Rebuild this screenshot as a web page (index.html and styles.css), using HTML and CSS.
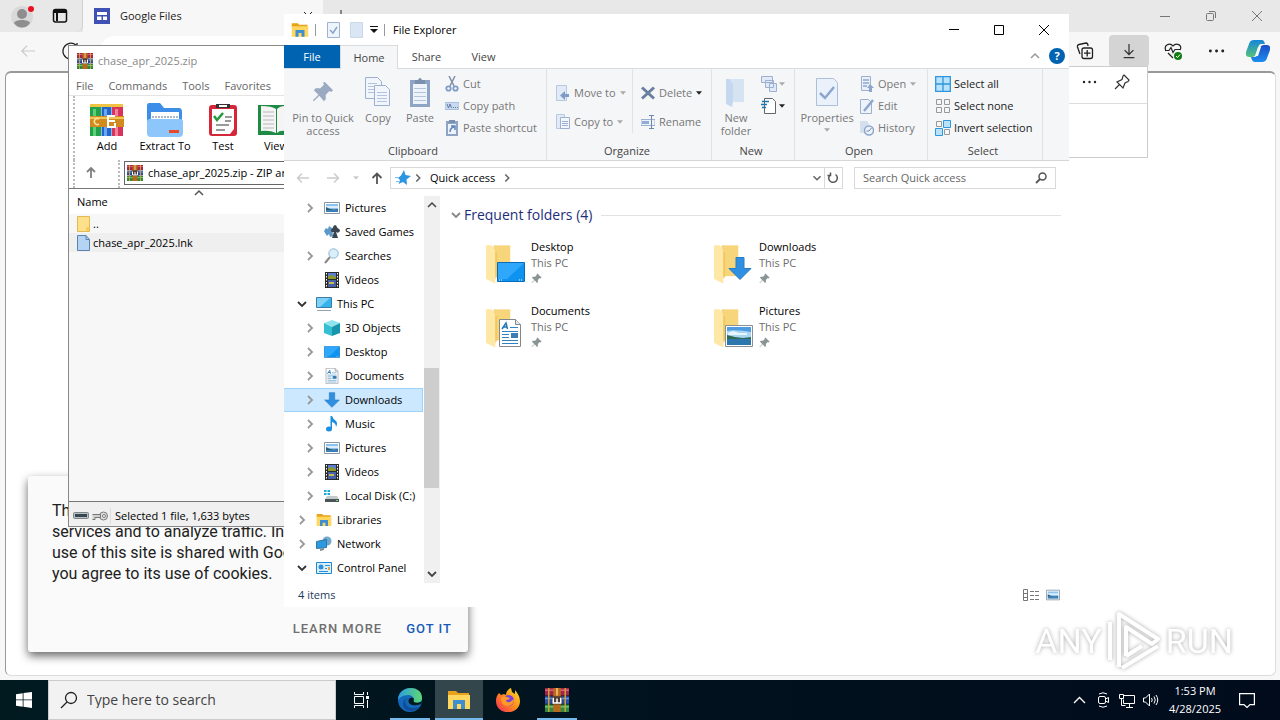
FILE: index.html
```
<!DOCTYPE html>
<html lang="en">

<head>
  <meta charset="UTF-8">
  <meta name="viewport" content="width=device-width, initial-scale=1.0">
  <title>Desktop</title>
  <link rel="stylesheet" href="styles.css">
</head>

<body>
  <!-- shared icons -->
  <svg class="sprite" aria-hidden="true">
    <symbol id="rar" viewBox="0 0 16 16">
      <path fill="#a3254b" d="M0 0h16v5H0z"/><path fill="#2b4fa8" d="M0 5.5h16v5H0z"/><path fill="#2d8a3e" d="M0 11h16v5H0z"/>
      <path fill="#e25c7a" d="M0 1h16v1H0z"/><path fill="#6a9be0" d="M0 6.5h16v1H0z"/><path fill="#6cc46e" d="M0 12h16v1H0z"/>
      <path fill="#c9a13a" d="M2 0h1v16H2zM13 0h1v16h-1z"/>
      <path fill="#b8691c" d="M5.5 0h5v16h-5z"/><path fill="#f3cf7a" d="M7.500 0h1v5h-1z"/>
      <path fill="#4c3b36" d="M4.5 5.5h7V11h-7z"/><path fill="none" stroke="#fff" d="M5.500 6.500v3.500h5v-3.500M8 7v3"/>
    </symbol>
    <symbol id="folder-lib" viewBox="0 0 24 20">
      <path fill="#e9a21b" d="M1 1h8l2 2h11v4H1z"/><path fill="#ffd75e" d="M1 5h22v14H1z"/><path fill="#3f8fd0" d="M6 19v-9h12v9h-4v-5h-4v5z"/>
    </symbol>
    <symbol id="chev-r" viewBox="0 0 16 16"><path fill="none" stroke="currentColor" stroke-width="1.8" d="M6 4l4 4-4 4"/></symbol>
    <symbol id="chev-d" viewBox="0 0 16 16"><path fill="none" stroke="currentColor" stroke-width="1.8" d="M4 6l4 4 4-4"/></symbol>
    <symbol id="chev-u" viewBox="0 0 16 16"><path fill="none" stroke="currentColor" stroke-width="1.5" d="M4 10l4-4 4 4"/></symbol>
    <symbol id="caret" viewBox="0 0 7 4"><path fill="currentColor" d="M0 0h7L3.500 4z"/></symbol>
    <symbol id="picture" viewBox="0 0 16 12">
      <path fill="#fff" stroke="#8a98a5" d="M.5.5h15v11H.5z"/><path fill="#8cc4ef" d="M2 2h12v8H2z"/><path fill="#dceefb" d="M2 4h12v2H2z"/><path fill="#2d5f74" d="M2 5l4 2 4 .5 4-.5v1H2z"/><path fill="#3c7fb8" d="M2 8h12v2H2z"/>
    </symbol>
    <symbol id="photo" viewBox="0 0 28 22">
      <path fill="#fff" stroke="#8a8f94" d="M.5.5h27v21H.5z"/><path fill="#4f9be0" d="M2 2h24v18H2z"/><path fill="#a9d6f5" d="M2 6q8-2 24 1v6H2z"/><path fill="#e9f5fc" d="M3 8l5-2 6 2 8 0v2H3z"/><path fill="#2f6a55" d="M2 10l8 2 8 1 8-1v3H2z"/><path fill="#2c77ae" d="M2 14h24v6H2z"/>
    </symbol>
    <symbol id="film" viewBox="0 0 14 16">
      <path fill="#2a2a2a" d="M0 0h14v16H0z"/><path fill="#5c7fd6" d="M3 1h8v6H3z"/><path fill="#8a9a30" d="M3 4l4-1 4 2v2H3z"/><path fill="#4661a8" d="M3 8h8v7H3z"/><path fill="#d0b84a" d="M4 10h5v2H4z"/>
      <path stroke="#fff" stroke-dasharray="1.5 1.5" d="M1.500 1v14M12.500 1v14"/>
    </symbol>
    <symbol id="arrow-down" viewBox="0 0 24 24"><path fill="#2f8fe0" stroke="#2b7cc4" d="M8 1h8v11h7L12 23 1 12h7z"/></symbol>
    <symbol id="screen" viewBox="0 0 28 20">
      <path fill="#0f93f0" stroke="#0a6cb8" d="M.5.5h27v19H.5z"/><path fill="#2fa8fb" d="M1 1h26L10 17H1z"/><path stroke="#fff" stroke-dasharray="1 1" d="M2 18h4M22 18h4"/>
    </symbol>
    <symbol id="doc" viewBox="0 0 22 28">
      <path fill="#fff" stroke="#82888e" d="M.5.5h16l5 5v22H.5z"/><path fill="#e4e7ea" stroke="#82888e" d="M16.500.5v5h5"/>
      <path fill="none" stroke="#2277b8" stroke-width="1.5" d="M3 10l4-6 1.500 6M4 8h4"/><path stroke="#2f83c2" d="M11 8.500h8M3 12.500h16M3 15.500h7M3 18.500h7M3 21.500h16M3 24.500h16"/><path fill="#3b7db5" d="M12 14h7v5h-7z"/>
    </symbol>
    <symbol id="folder" viewBox="0 0 30 42">
      <path fill="#f7d57a" d="M8 1h18v33H8z"/><path fill="#ffe7a5" d="M0 1h6l4 6v35L0 37z"/><path fill="#f1c95f" d="M10 7v30l2-3V9z"/>
    </symbol>
    <symbol id="pin" viewBox="0 0 24 24"><path fill="currentColor" d="M14 1l9 9-2 2-2-1-4 4v5l-2 2-5-6-6 6-1-1 6-6-5-5 2-2h5l4-4-1-2z"/></symbol>
  </svg>

  <main class="desktop">
    <section class="browser">
      <div class="tabstrip">
        <div class="corner">
          <svg class="avatar" viewBox="0 0 24 24"><circle cx="11" cy="13" r="11" fill="#d9d9d9"/><circle cx="11" cy="10" r="5" fill="#8e8e8e"/><path fill="#8e8e8e" d="M3 19c1-4 15-4 16 0-4 6-12 6-16 0z"/><circle cx="20" cy="5" r="3" fill="#e81123"/></svg>
          <svg class="workspaces" viewBox="0 0 16 16"><rect x="1.5" y="1.5" width="13" height="12.5" rx="2" fill="none" stroke="#111" stroke-width="1.5"/><path fill="#111" d="M2 2h12v3H2zM4 4h2v9H4z"/></svg>
        </div>
        <div class="tab">
          <svg class="favicon" viewBox="0 0 16 16"><path fill="#3f51b5" d="M0 0h16v16H0z"/><path fill="#fff" d="M3 4h10v3H3zM3 8.500h4.500V12H3zM9 8.500h4V12H9z"/></svg>
          <span>Google Files</span>
          <svg class="tab-close" viewBox="0 0 10 10"><path stroke="#222" d="M1 1l8 8M9 1L1 9"/></svg>
        </div>
        <svg class="new-tab" viewBox="0 0 12 12"><path stroke="#222" d="M6 0v12M0 6h12"/></svg>
        <div class="win-controls">
          <svg viewBox="0 0 12 12"><path stroke="#777" d="M1 6.500h10"/></svg>
          <svg viewBox="0 0 12 12"><rect x="1.5" y="3.5" width="7" height="7" rx="1" fill="none" stroke="#777"/><path fill="none" stroke="#777" d="M4 1.500h5q1.500 0 1.500 1.500v5"/></svg>
          <svg viewBox="0 0 12 12"><path stroke="#777" d="M1 1l10 10M11 1L1 11"/></svg>
        </div>
      </div>
      <div class="toolbar">
        <svg class="back" viewBox="0 0 18 16"><path fill="none" stroke="#c9c9c9" stroke-width="1.3" d="M17 8H2M8 2L2 8l6 6"/></svg>
        <svg class="reload" viewBox="0 0 18 18"><path fill="none" stroke="#222" stroke-width="1.3" d="M14 3a8 8 0 1 0 3 6M15 1v4h-4"/></svg>
        <div class="omnibox"><svg viewBox="0 0 14 14"><circle cx="6" cy="5" r="3.5" fill="none" stroke="#333"/><path stroke="#333" d="M9 8l4 4"/></svg></div>
        <div class="actions">
          <svg viewBox="0 0 18 18"><path fill="none" stroke="#222" stroke-width="1.3" d="M4 12L1.500 5Q1 3 3 2.500l7-1.500q2 0 2 3"/><rect x="6" y="6" width="10.5" height="10.5" rx="2" fill="#f7f7f7" stroke="#222" stroke-width="1.3"/><path stroke="#222" stroke-width="1.3" d="M11.200 8v6.500M8 11.200h6.500"/></svg>
          <button class="downloads-btn" aria-label="Downloads"><svg viewBox="0 0 16 18"><path fill="none" stroke="#333" stroke-width="1.4" d="M8 1v12M3 8l5 5 5-5M2 16.500h12"/></svg></button>
          <svg viewBox="0 0 18 18"><path fill="none" stroke="#222" stroke-width="1.2" d="M2 9C-1 3 6 0 9 4c3-4 10-1 7 4M4 11l5 5M1 8.500h4l2-3 2 5 2-3h5"/><circle cx="14" cy="14" r="4" fill="#107c10"/><path fill="none" stroke="#fff" d="M12 14l1.500 1.500L16 12.500"/></svg>
          <svg viewBox="0 0 16 16"><g fill="#222"><circle cx="3" cy="8" r="1.3"/><circle cx="8.5" cy="8" r="1.3"/><circle cx="14" cy="8" r="1.3"/></g></svg>
          <svg class="copilot" viewBox="0 0 24 22">
            <defs><linearGradient id="cpA" x2="0" y2="1"><stop stop-color="#1686d9"/><stop offset="1" stop-color="#54c27b"/></linearGradient><linearGradient id="cpB" x2="0" y2="1"><stop stop-color="#1c4fc4"/><stop offset="1" stop-color="#1b8cf0"/></linearGradient></defs>
            <path fill="url(#cpB)" d="M16 22H9q-3 0-4-5h4q2 0 3-3l2-6q1-3 4-3h3q4 0 3 5l-3 8q-1 4-5 4z"/>
            <path fill="url(#cpA)" d="M8 0h8q2 0 3 4h-4q-2 0-3 4l-2 6q-1 3-4 3H3q-4 0-3-5L3 4q1-4 5-4z"/>
            <path fill="#f7f7f7" d="M12 7h3l-3 9H9z"/>
          </svg>
        </div>
      </div>
      <div class="page">
        <div class="cookie-bar">
          <p>This site uses cookies from Google to deliver its services and to analyze traffic. Information about your use of this site is shared with Google. By using this site, you agree to its use of cookies.</p>
          <div class="cookie-actions">
            <button>LEARN MORE</button>
            <button class="primary">GOT IT</button>
          </div>
        </div>
      </div>
      <div class="downloads-panel">
        <div class="panel-head">
          <svg viewBox="0 0 16 16"><g fill="#222"><circle cx="3" cy="8" r="1.2"/><circle cx="8.5" cy="8" r="1.2"/><circle cx="14" cy="8" r="1.2"/></g></svg>
          <svg viewBox="0 0 18 18"><path fill="none" stroke="#333" stroke-width="1.2" d="M11 2l5 5-1 1.500-3 1.500-2 5L4 9l5-2.500L10 3zM6.500 11.500L2 16"/></svg>
        </div>
      </div>
    </section>

    <section class="window winrar">
      <header class="title"><svg><use href="#rar"/></svg>chase_apr_2025.zip</header>
      <nav class="menu"><a href="#">File</a><a href="#">Commands</a><a href="#">Tools</a><a href="#">Favorites</a></nav>
      <div class="tools">
        <button>
          <svg viewBox="0 0 34 34">
            <path fill="#22a04a" d="M0 1h11v32H0z"/><path fill="#2366c9" d="M11.500 1h10v32h-10z"/><path fill="#d8345b" d="M22 1h11v32H22z"/><path fill="#5fd07a" d="M3 6h3v27H3z"/><path fill="#6aa5f2" d="M14 6h3v27h-3z"/><path fill="#f3839d" d="M25 6h3v27h-3z"/>
            <path fill="#f0c443" d="M0 1h33v3H0z"/><path fill="#d18a1e" d="M0 13h34v11H0z"/><path fill="#f4c457" d="M0 14h34v2H0z"/><path fill="none" stroke="#fff" stroke-width="2" d="M25 13h-7v11h7v-4M19 18h6"/><path fill="none" stroke="#fbe29a" stroke-width="1.5" d="M9 16a3 3 0 1 0 0 5"/>
          </svg>Add</button>
        <button>
          <svg viewBox="0 0 36 34"><path fill="#3d8ee8" d="M2 0h11l4 5h15q3 0 3 4v12H0V3q0-3 2-3z"/><path fill="#fff" d="M4 9h28v10H4z"/><path stroke="#aab8c8" stroke-width="2" stroke-dasharray="2 1" d="M5 14h26"/><path fill="#8cc6fa" d="M0 19q0-3 3-3h30q3 0 3 3v11q0 4-4 4H4q-4 0-4-4z"/><path fill="#e8472b" d="M22 27h10v3H22z"/></svg>Extract To</button>
        <button>
          <svg viewBox="0 0 30 34"><rect x="1" y="2" width="28" height="31" rx="3" fill="#d5263a"/><path fill="#fdfdfd" d="M4 6h22v20l-4 5H4z"/><path fill="#333" d="M8 1h14v4H8z"/><path fill="#fff" d="M11 2h8v2h-8z"/><path fill="none" stroke="#249a3e" stroke-width="2.5" d="M6 13l3 4 6-7"/><path stroke="#777" stroke-width="1.5" d="M17 14h7M17 18h6M8 22h13M8 27h9"/></svg>Test</button>
        <button class="view">
          <svg viewBox="0 0 36 34"><path fill="#1f8a44" d="M0 2h28v30H0z"/><path fill="#b7263a" d="M26 2h10v30H26z"/><path fill="#f4f4f4" d="M3 3q11 0 15 3v24q-6-3-15-2zM19 6q3-3 8-3v25q-5-1-8 2z"/><path stroke="#b9b9b9" d="M5 9h11M5 13h11M5 17h11M5 21h11M5 25h11"/></svg>View</button>
      </div>
      <div class="path">
        <button aria-label="Up"><svg viewBox="0 0 12 12"><path fill="none" stroke="#808080" stroke-width="1.8" d="M6 12V2M2 6l4-4 4 4"/></svg></button>
        <div class="path-field">
          <div class="path-box"><svg><use href="#rar"/></svg>chase_apr_2025.zip - ZIP archive</div>
        </div>
      </div>
      <div class="list">
        <div class="list-head">Name<svg><use href="#chev-u"/></svg></div>
        <div class="file"><svg viewBox="0 0 13 16"><path fill="#ffe08a" stroke="#e2b955" d="M.5.500h12v15H.5z"/><path fill="#f7cd62" d="M9 11h3v4H9z"/></svg>..</div>
        <div class="file selected"><svg viewBox="0 0 13 16"><path fill="#b5d4f3" stroke="#5b83b0" d="M.5.500h8.500l3.500 4v11H.5z"/><path fill="none" stroke="#5b83b0" d="M9 .5v4h3.500"/></svg>chase_apr_2025.lnk</div>
      </div>
      <footer>
        <div class="disk">
          <svg viewBox="0 0 16 12"><rect x=".5" y="2.5" width="15" height="6" rx="1" fill="#b8bec2" stroke="#7e878c"/><path fill="#37474f" d="M2 4h12v3H2z"/></svg>
          <svg viewBox="0 0 16 12"><circle cx="11.5" cy="6" r="4" fill="#e0e0e0" stroke="#777"/><circle cx="12" cy="6" r="1.5" fill="#fff" stroke="#777"/><path fill="#d0d0d0" stroke="#777" d="M.5 4.500h8v3H3v2H.5"/></svg>
        </div>
        <span>Selected 1 file, 1,633 bytes</span>
      </footer>
    </section>

    <section class="window explorer">
      <header class="title">
        <svg class="app"><use href="#folder-lib"/></svg>
        <i class="bar"></i>
        <svg class="qa" viewBox="0 0 13 16"><path fill="#eef4fb" stroke="#9fb3cf" d="M.5.500h12v15H.5z"/><path fill="none" stroke="#8aa4c8" stroke-width="1.5" d="M3 8l3 3 4-6"/></svg>
        <svg class="qa" viewBox="0 0 13 16"><path fill="#dbe6f4" stroke="#c9d8ea" d="M.5.500h12v15H.5z"/></svg>
        <svg class="more" viewBox="0 0 8 8"><path fill="#111" d="M0 0h8v1H0zM0 3h8L4 7z"/></svg>
        <i class="bar"></i>
        <h1>File Explorer</h1>
        <div class="win-controls">
          <button aria-label="Minimize"><svg viewBox="0 0 12 12"><path stroke="#000" d="M1 5.500h10"/></svg></button>
          <button aria-label="Maximize"><svg viewBox="0 0 12 12"><path fill="none" stroke="#000" d="M1.500 1.500h9v9h-9z"/></svg></button>
          <button aria-label="Close"><svg viewBox="0 0 12 12"><path stroke="#000" d="M1 1l10 10M11 1L1 11"/></svg></button>
        </div>
      </header>
      <nav class="ribbon-tabs">
        <button class="file-tab">File</button>
        <button class="active">Home</button>
        <button>Share</button>
        <button>View</button>
        <svg class="collapse"><use href="#chev-u"/></svg>
        <button class="help" aria-label="Help">?</button>
      </nav>
      <div class="ribbon">
        <div class="group clipboard">
          <div class="group-body">
            <button class="big pin-btn"><svg><use href="#pin"/></svg>Pin to Quick access</button>
            <button class="big copy"><svg viewBox="0 0 26 30"><g fill="#f2f6fc" stroke="#9db0d0"><path d="M.5.500h12l4 4v17H.5z"/><path d="M9.500 8.500h11l4 4v16h-15z"/></g><path stroke="#b4c4de" d="M3 6.500h9M3 9.500h6M3 12.500h6M3 15.500h6M12 15.500h10M12 18.500h10M12 21.500h10M12 24.500h10"/></svg>Copy</button>
            <button class="big"><svg viewBox="0 0 22 30"><path fill="#8fa4c4" d="M1 3h20v27H1z"/><path fill="#eef3fa" d="M4 7h14v20H4z"/><path fill="#7b8fae" d="M6 3h3q2-4 4 0h3v4H6z"/><path stroke="#b4c4de" d="M5 11.500h12M5 15.500h12M5 19.500h12M5 23.500h12"/></svg>Paste</button>
            <div class="stack">
              <button><svg viewBox="0 0 14 16"><path stroke="#8090a8" stroke-width="1.5" d="M4 0l5 10M10 0L5 10"/><g fill="none" stroke="#7f9cc8" stroke-width="1.8"><circle cx="3.5" cy="12.5" r="2.2"/><circle cx="10.5" cy="12.5" r="2.2"/></g></svg>Cut</button>
              <button><svg viewBox="0 0 14 16"><path fill="#c9d9ef" stroke="#a9bfdf" d="M0 4.500h14v7H0z"/><path fill="none" stroke="#5f7ca8" d="M2 6l1.500 4L5 6l1.500 4M8 9.500h1M10 9.500h1M12 9.500h1"/></svg>Copy path</button>
              <button><svg viewBox="0 0 14 16"><path fill="#8fa4c4" d="M1 1h12v15H1z"/><path fill="#eef3fa" d="M3 4h8v10H3z"/><path fill="#7b8fae" d="M4 0h6v3H4z"/><path fill="none" stroke="#5f84bb" stroke-width="1.5" d="M5 12q0-4 4-5M6 6h4v4"/></svg>Paste shortcut</button>
            </div>
          </div>
          <h2>Clipboard</h2>
        </div>
        <div class="group organize">
          <div class="group-body">
            <div class="stack wide">
              <button><svg viewBox="0 0 14 16"><path fill="#e1eaf6" stroke="#b8c8de" d="M.5.500h10v15H.5z"/><path fill="#7f9cc8" d="M13 9H9V6l-5 4.500L9 15v-3h4z"/></svg>Move to<svg class="caret"><use href="#caret"/></svg></button>
              <button><svg viewBox="0 0 14 16"><path fill="#e1eaf6" stroke="#b8c8de" d="M.5.500h8v14H.5z"/><path fill="#f2f6fc" stroke="#9db0d0" d="M4.500 3.500h9v11h-9z"/><path stroke="#9db0d0" d="M6 7.500h6M6 9.500h6M6 11.500h6"/></svg>Copy to<svg class="caret"><use href="#caret"/></svg></button>
            </div>
            <div class="stack wide second">
              <button><svg viewBox="0 0 14 16"><path stroke="#6a7f9f" stroke-width="3" d="M1 2.500l12 11M13 2.500l-12 11"/></svg>Delete<svg class="caret dark"><use href="#caret"/></svg></button>
              <button><svg viewBox="0 0 14 16"><path fill="#eef3fa" stroke="#9db0d0" d="M0 5.500h14v6H0z"/><path fill="#8fabd6" d="M1 7h7v3H1z"/><path stroke="#6f86ab" d="M10.500 2v12M8 1.500h5M8 14.500h5"/></svg>Rename</button>
            </div>
          </div>
          <h2>Organize</h2>
        </div>
        <div class="group new">
          <div class="group-body">
            <button class="big"><svg viewBox="0 0 22 30"><path fill="#d5e3f3" d="M4 2h15v23H4z"/><path fill="#c6d8ed" d="M1 2h3l4 5v18l-1 5-6-3z"/></svg>New folder</button>
            <div class="stack">
              <button aria-label="New item"><svg viewBox="0 0 16 16"><g fill="#e1eaf6" stroke="#9db0d0"><path d="M.5.500h11v6H.5zM4.500 4.500h8v7h-8zM8.500 7.500h7v8h-7z"/></g></svg><svg class="caret"><use href="#caret"/></svg></button>
              <button class="enabled" aria-label="Easy access"><svg viewBox="0 0 16 16"><path fill="#fff" stroke="#666" d="M3.500.5h8l3 3v12h-11z"/><path stroke="#1c78b5" stroke-width="1.3" d="M1 3.500h7M0 6.500h6M1 9.500h4"/></svg><svg class="caret"><use href="#caret"/></svg></button>
            </div>
          </div>
          <h2>New</h2>
        </div>
        <div class="group open">
          <div class="group-body">
            <button class="big"><svg viewBox="0 0 22 30"><path fill="#eaf1fa" stroke="#aebfd9" d="M.5 1.500h17l4 4v23H.5z"/><path fill="none" stroke="#8ea6cd" stroke-width="2.5" d="M4 16l5 5 9-11"/></svg>Properties<svg class="caret"><use href="#caret"/></svg></button>
            <div class="stack">
              <button><svg viewBox="0 0 14 16"><path fill="#e9f0f9" stroke="#9db0d0" d="M1.500.5h9v14h-9z"/><path stroke="#8ea6cd" stroke-width="1.5" d="M3 4h6M3 7h6M3 10h4"/><path fill="#8ea6cd" d="M10 8l4 4h-2v4H9v-4H7z"/></svg>Open<svg class="caret"><use href="#caret"/></svg></button>
              <button><svg viewBox="0 0 14 16"><path fill="#eef3fa" stroke="#9db0d0" d="M.5 1.500h8l3 3v11H.5z"/><path stroke="#8ea6cd" stroke-width="2.5" d="M4 13l9-11"/></svg>Edit</button>
              <button><svg viewBox="0 0 14 16"><path fill="#d5e0ee" d="M0 1h7l2 3v9H0z"/><circle cx="9" cy="10.5" r="4.5" fill="#eef3fa" stroke="#8ea6cd" stroke-width="1.5"/><path fill="none" stroke="#7189ae" d="M11.500 8L9 11H6.500"/></svg>History</button>
            </div>
          </div>
          <h2>Open</h2>
        </div>
        <div class="group select">
          <div class="group-body">
            <div class="stack enabled">
              <button><svg viewBox="0 0 16 16"><path fill="#b9e2fb" stroke="#2e96dc" stroke-width="1.3" d="M.7.7h14.600v14.600H.7zM8 .7v14.600M.7 8h14.600"/></svg>Select all</button>
              <button><svg viewBox="0 0 16 16"><path fill="none" stroke="#999" d="M1.500 1.500h5v5h-5zM9.500 1.500h5v5h-5zM1.500 9.500h5v5h-5zM9.500 9.500h5v5h-5z"/></svg>Select none</button>
              <button><svg viewBox="0 0 16 16"><path fill="none" stroke="#999" d="M1.500 1.500h5v5h-5zM9.500 9.500h5v5h-5z"/><path fill="#b9e2fb" stroke="#2e96dc" d="M8.500.5h7v7h-7zM.5 8.500h7v7h-7z"/></svg>Invert selection</button>
            </div>
          </div>
          <h2>Select</h2>
        </div>
      </div>
      <div class="address">
        <button class="dim" aria-label="Back"><svg viewBox="0 0 14 12"><path fill="none" stroke="currentColor" stroke-width="1.5" d="M13 6H2M6 1.500L1.500 6 6 10.500"/></svg></button>
        <button class="dim" aria-label="Forward"><svg viewBox="0 0 14 12"><path fill="none" stroke="currentColor" stroke-width="1.5" d="M1 6h11M8 1.500L12.500 6 8 10.500"/></svg></button>
        <button class="dim recent" aria-label="Recent locations"><svg class="caret"><use href="#caret"/></svg></button>
        <button class="up" aria-label="Up"><svg viewBox="0 0 12 12"><path fill="none" stroke="#555" stroke-width="1.8" d="M6 12V2M1.500 6L6 1.500 10.500 6"/></svg></button>
        <div class="crumbs">
          <svg class="star" viewBox="0 0 16 16"><path fill="#2d96e0" d="M9 0l1.500 5L16 6l-4.500 3.500L12 15l-4-3-4.500 2L5 10 3 8l3-2.500z"/><path stroke="#7cc0f0" d="M0 7.500h4M1 11.500h3"/></svg>
          <svg><use href="#chev-r"/></svg>
          <span>Quick access</span>
          <svg><use href="#chev-r"/></svg>
          <svg class="drop"><use href="#chev-d"/></svg>
          <button class="refresh" aria-label="Refresh"><svg viewBox="0 0 12 12"><path fill="none" stroke="#555" stroke-width="1.5" d="M8.500 2.500A4.300 4.300 0 1 1 3 3M3.500.5v3h-3"/></svg></button>
        </div>
        <label class="search">
          <input type="text" placeholder="Search Quick access" aria-label="Search Quick access">
          <svg viewBox="0 0 12 12"><circle cx="7.5" cy="4.5" r="3.5" fill="none" stroke="#555" stroke-width="1.5"/><path stroke="#555" stroke-width="1.8" d="M5 7l-4 4"/></svg>
        </label>
      </div>
      <div class="body">
        <ul class="tree">
          <li><svg class="chev"><use href="#chev-r"/></svg><svg><use href="#picture"/></svg><a href="#">Pictures</a></li>
          <li><i class="chev"></i><svg viewBox="0 0 16 16"><path fill="#5c99c9" d="M0 7l2-3 2 1 1-3 3 2 1 8-3 1-1-3-2 2-2-3z"/><path fill="#394650" d="M7 7c0-3 2-2 2-4q2-4 4 0c0 2 3 1 3 4q-2 3-4 1l2 6H8l2-6q-2 1-3-1z"/></svg><a href="#">Saved Games</a></li>
          <li><svg class="chev"><use href="#chev-r"/></svg><svg viewBox="0 0 16 16"><path stroke="#888" stroke-width="2" d="M1 15l5-6"/><circle cx="9.5" cy="5.5" r="4.7" fill="#d9effc" stroke="#8fb6cf"/></svg><a href="#">Searches</a></li>
          <li><i class="chev"></i><svg><use href="#film"/></svg><a href="#">Videos</a></li>
          <li class="top open"><svg class="chev"><use href="#chev-d"/></svg><svg viewBox="0 0 16 16"><path fill="#35b3ea" stroke="#3c7ca6" d="M.5 1.500h15v10H.5z"/><path fill="#7fd2f7" d="M1 2h13L4 11H1z"/><path stroke="#98a4ad" d="M1 14.500h14"/></svg><a href="#">This PC</a></li>
          <li><svg class="chev"><use href="#chev-r"/></svg><svg viewBox="0 0 16 16"><path fill="#8fe4ee" d="M8 0l8 3-8 4-8-4z"/><path fill="#36bfd2" d="M0 3l8 4v9l-8-3z"/><path fill="#1795ab" d="M16 3L8 7v9l8-3z"/></svg><a href="#">3D Objects</a></li>
          <li><svg class="chev"><use href="#chev-r"/></svg><svg><use href="#screen"/></svg><a href="#">Desktop</a></li>
          <li><svg class="chev"><use href="#chev-r"/></svg><svg><use href="#doc"/></svg><a href="#">Documents</a></li>
          <li class="current"><svg class="chev"><use href="#chev-r"/></svg><svg><use href="#arrow-down"/></svg><a href="#">Downloads</a></li>
          <li><svg class="chev"><use href="#chev-r"/></svg><svg viewBox="0 0 16 16"><ellipse cx="5" cy="13" rx="3" ry="2.5" fill="#1b8fe0"/><path fill="#1b8fe0" d="M6.500 0h1.500q1 3 4 5 2 2 0 6 0-4-4-5v7H6.500z"/></svg><a href="#">Music</a></li>
          <li><svg class="chev"><use href="#chev-r"/></svg><svg><use href="#picture"/></svg><a href="#">Pictures</a></li>
          <li><svg class="chev"><use href="#chev-r"/></svg><svg><use href="#film"/></svg><a href="#">Videos</a></li>
          <li><svg class="chev"><use href="#chev-r"/></svg><svg viewBox="0 0 16 16"><path fill="#17a9dc" d="M0 2h2.500v2H0zM3.500 2H6v2H3.500zM0 5h2.500v2H0zM3.500 5H6v2H3.500z"/><path fill="#c3c9cd" d="M3 8h10l2 3H1z"/><path fill="#4a5358" d="M1 11h14v3H1z"/><path fill="#6fdc6f" d="M12 12h2v1h-2z"/></svg><a href="#">Local Disk (C:)</a></li>
          <li class="top"><svg class="chev"><use href="#chev-r"/></svg><svg><use href="#folder-lib"/></svg><a href="#">Libraries</a></li>
          <li class="top"><svg class="chev"><use href="#chev-r"/></svg><svg viewBox="0 0 16 16"><circle cx="11" cy="5" r="4.5" fill="#6fa9cd"/><path fill="#2b9ae0" stroke="#35749f" d="M.5 5.500l10-2v8l-10 1z"/><path fill="#7a8b96" d="M4 13l4-1v2l-4 1z"/></svg><a href="#">Network</a></li>
          <li class="top open"><svg class="chev"><use href="#chev-d"/></svg><svg viewBox="0 0 16 12"><path fill="#d8effc" stroke="#1e88cf" d="M.5.500h15v11H.5z"/><circle cx="5" cy="5" r="2.5" fill="#2f8fd8"/><path stroke="#2f8fd8" d="M9 3.500h5M9 6.500h2M3 9.500h9"/><path fill="#f0a030" d="M12 5h2v3h-2z"/></svg><a href="#">Control Panel</a></li>
        </ul>
        <div class="scrollbar">
          <svg><use href="#chev-u"/></svg>
          <div class="track"><i></i></div>
          <svg><use href="#chev-d"/></svg>
        </div>
        <div class="content">
          <h2><svg><use href="#chev-d"/></svg>Frequent folders (4)</h2>
          <div class="folders">
            <a href="#" class="folder">
              <span class="thumb"><svg><use href="#folder"/></svg><svg class="over"><use href="#screen"/></svg></span>
              <span class="info"><b>Desktop</b><span>This PC</span><svg><use href="#pin"/></svg></span>
            </a>
            <a href="#" class="folder">
              <span class="thumb"><svg><use href="#folder"/></svg><svg class="over arrow"><use href="#arrow-down"/></svg></span>
              <span class="info"><b>Downloads</b><span>This PC</span><svg><use href="#pin"/></svg></span>
            </a>
            <a href="#" class="folder">
              <span class="thumb"><svg><use href="#folder"/></svg><svg class="over paper"><use href="#doc"/></svg></span>
              <span class="info"><b>Documents</b><span>This PC</span><svg><use href="#pin"/></svg></span>
            </a>
            <a href="#" class="folder">
              <span class="thumb"><svg><use href="#folder"/></svg><svg class="over"><use href="#photo"/></svg></span>
              <span class="info"><b>Pictures</b><span>This PC</span><svg><use href="#pin"/></svg></span>
            </a>
          </div>
        </div>
      </div>
      <footer>
        <span>4 items</span>
        <svg viewBox="0 0 16 12"><path fill="none" stroke="#777" d="M.5.500h4v11h-4zM.5 4.500h4M.5 8.500h4"/><path stroke="#777" stroke-dasharray="4 1" d="M7 2.500h9M7 6.500h9M7 10.500h9"/></svg>
        <svg><use href="#picture"/></svg>
      </footer>
    </section>

    <div class="watermark">
      <span>ANY</span>
      <svg viewBox="0 0 56 62"><g fill="none" stroke="#fff" stroke-width="4" stroke-linejoin="round"><path d="M13 57V4l39 25-6 5L20 17v29"/><path d="M4 50V12M16 58l36-22M20 46l16-10"/></g></svg>
      <span>RUN</span>
    </div>
  </main>

  <footer class="taskbar">
    <button class="start" aria-label="Start"><svg viewBox="0 0 16 16"><path fill="#fff" d="M0 2.200l6.700-1v6.300H0zM7.500 1.100L16 0v7.500H7.500zM0 8.300h6.700v6.400L0 13.800zM7.500 8.300H16V16l-8.500-1.200z"/></svg></button>
    <label class="task-search">
      <svg viewBox="0 0 18 18"><circle cx="11" cy="7" r="5.5" fill="none" stroke="#222" stroke-width="1.3"/><path stroke="#222" stroke-width="1.3" d="M7 11l-6 6"/></svg>
      <input type="text" placeholder="Type here to search" aria-label="Type here to search">
    </label>
    <button aria-label="Task view"><svg class="small" viewBox="0 0 16 16"><path fill="none" stroke="#fff" d="M1.500 4.500h9v7h-9zM1.500 0v2.500h9V0M1.500 16v-2.500h9V16M14.500 0v3M14.500 8v8"/><path fill="#fff" d="M13 4h3v3h-3z"/></svg></button>
    <button class="running" aria-label="Edge">
      <svg viewBox="0 0 24 24">
        <defs><linearGradient id="edA" x2="1" y2="0"><stop stop-color="#2b9de0"/><stop offset="1" stop-color="#5fd873"/></linearGradient></defs>
        <circle cx="12" cy="12" r="12" fill="#1567ba"/><path fill="url(#edA)" d="M0 12C0-3 24-4 24 10c0 5-6 7-9 4 2-3 0-7-5-7-5 0-9 3-10 5z"/><path fill="#0f4f9a" d="M9 10c-4 4 0 11 7 10l5-1c-5 7-17 4-16-4q1-4 4-5z"/>
        <path fill="#011a20" d="M11 11q-2 4 3 6 4 1 9-1l1-3q-4 3-8 1-1-1 0-3-2-3-5 0z"/>
      </svg>
    </button>
    <button class="running current" aria-label="File Explorer"><svg><use href="#folder-lib"/></svg></button>
    <button aria-label="Firefox">
      <svg viewBox="0 0 24 24">
        <defs><linearGradient id="ffA" x1="1" x2="0" y2="1"><stop stop-color="#ffe226"/><stop offset=".5" stop-color="#ff8a1c"/><stop offset="1" stop-color="#f5275c"/></linearGradient></defs>
        <path fill="url(#ffA)" d="M3 5l2 2 3-1 2 1q0-5 5-7l1 4 3 2V2q5 6 5 11c0 15-24 15-24 0q0-5 3-8z"/><circle cx="12.5" cy="12.5" r="5.5" fill="#7a3fe0"/><path fill="#ff9a24" d="M5 10q3-3 6-1l3 1q-1 2-4 2 0 3 4 2l4-3q0 7-7 7-6-1-6-8z"/>
      </svg>
    </button>
    <button class="running" aria-label="WinRAR"><svg><use href="#rar"/></svg></button>
    <div class="tray">
      <svg viewBox="0 0 16 16"><path fill="none" stroke="#fff" stroke-width="1.3" d="M3 11l5.500-5.500L14 11"/></svg>
      <svg viewBox="0 0 16 16"><rect x="3.5" y="4.5" width="7" height="7" rx="1.5" fill="none" stroke="#fff"/><path fill="none" stroke="#fff" d="M10.500 7l3-1.500v5l-3-1.500M4 2q4-2.500 8 0M4 14q4 2.500 8 0"/></svg>
      <svg viewBox="0 0 16 16"><path fill="none" stroke="#fff" d="M4.500 3.500h11v8h-11v-4M.5 2.500h4v4h-4zM2.500 6.500v7h4M10.500 12v3M7 15.500h7"/></svg>
      <svg viewBox="0 0 16 16"><path fill="none" stroke="#fff" d="M.5 6v4h2l4 4V2l-4 4zM8.500 6q1.500 2 0 4M11 4.500q2.500 3.500 0 7M13 3q3.500 5 0 10"/></svg>
      <time>1:53 PM<br>4/28/2025</time>
      <svg class="notes" viewBox="0 0 16 16"><path fill="none" stroke="#fff" stroke-width="1.2" d="M.6 1.600h14.800v11H11L8 15.500l-3-2.900H.6z"/></svg>
    </div>
  </footer>
</body>

</html>
```
FILE: styles.css
```
* {
  box-sizing: border-box;
  margin: 0;
  padding: 0;
}

body {
  display: flex;
  flex-direction: column;
  height: 100vh;
  overflow: hidden;
  font-family: "Open Sans", "Noto Sans", sans-serif;
  font-size: 11px;
  line-height: 16px;
  color: #000;
}

button,
input {
  font: inherit;
  color: inherit;
  background: none;
  border: 0;
  outline: 0;
}

a {
  color: inherit;
  text-decoration: none;
}

svg {
  display: block;
  flex: none;
  width: 16px;
  height: 16px;
}

.sprite {
  position: absolute;
  width: 0;
  height: 0;
}

.desktop {
  position: relative;
  flex: 1;
  min-height: 0;
}

/* browser */
.browser {
  display: flex;
  flex-direction: column;
  height: 100%;
  background: #f7f7f7;
}

.tabstrip {
  display: flex;
  height: 32px;
  background: #e8e8e8;
}

.corner {
  display: flex;
  align-items: center;
  width: 83px;
  padding-left: 11px;
  gap: 17px;
  border-right: 1px solid #d0d0d0;
  border-bottom-right-radius: 6px;
}

.avatar {
  width: 24px;
  height: 24px;
}

.tab {
  display: flex;
  align-items: center;
  width: 240px;
  padding: 0 10px 0 11px;
  gap: 10px;
  background: #f7f7f7;
  color: #222;
}

.tab-close {
  width: 10px;
  margin-left: auto;
}

.new-tab {
  width: 12px;
  margin: 8px 12px;
}

.browser .win-controls {
  display: flex;
  align-items: center;
  gap: 34px;
  margin-left: auto;
  padding-right: 17px;
}

.browser .win-controls svg {
  width: 12px;
}

.toolbar {
  display: flex;
  align-items: center;
  height: 38px;
  padding: 0 10px 0 20px;
}

.reload {
  width: 18px;
  height: 18px;
  margin-left: 26px;
}

.omnibox {
  flex: 1;
  height: 30px;
  margin: 0 20px;
  padding: 8px 16px;
  border-radius: 15px;
  background: #fff;
}

.actions {
  display: flex;
  align-items: center;
  gap: 15px;
}

.actions > svg {
  width: 18px;
  height: 18px;
  margin-right: 10px;
}

.actions .copilot {
  width: 24px;
  height: 22px;
  margin: 0 0 0 -4px;
}

.downloads-btn {
  display: flex;
  align-items: center;
  justify-content: center;
  width: 40px;
  height: 32px;
  margin: 0 0 0 -10px;
  border-radius: 4px;
  background: #d4d4d4;
}

.page {
  position: relative;
  flex: 1;
  margin: 1px 4px 4px 5px;
  border: 1px solid #ddd;
  border-top: 2px solid #999;
  border-left-color: #999;
  border-radius: 6px;
  background: #fff;
}

.downloads-panel {
  position: absolute;
  top: 66px;
  right: 132px;
  width: 360px;
  height: 92px;
  border: 1px solid #ccc;
  background: #fff;
}

.panel-head {
  display: flex;
  align-items: center;
  justify-content: flex-end;
  height: 37px;
  padding: 0 16px 6px;
  gap: 16px;
  border-bottom: 1px solid #ddd;
}

.panel-head svg:last-child {
  width: 18px;
  height: 18px;
}

.cookie-bar {
  position: absolute;
  left: 22px;
  bottom: 23px;
  width: 440px;
  padding: 24px 16px 14px 24px;
  border-radius: 3px;
  background: #fafafa;
  box-shadow: 0 4px 10px #0009;
  font-family: Roboto, sans-serif;
}

.cookie-bar p {
  font-size: 16px;
  line-height: 21px;
  color: #212121;
}

.cookie-actions {
  display: flex;
  justify-content: flex-end;
  margin-top: 36px;
  gap: 24px;
}

.cookie-actions button {
  height: 18px;
  font-size: 13px;
  font-weight: 500;
  letter-spacing: 1px;
  color: #6f6f6f;
}

.cookie-actions .primary {
  color: #185abc;
}

/* windows */
.window {
  position: absolute;
  display: flex;
  flex-direction: column;
  background: #fff;
}

.window .title {
  display: flex;
  align-items: center;
}

.winrar {
  top: 45px;
  left: 68px;
  width: 600px;
  height: 482px;
  border: 1px solid #888;
}

.winrar .title {
  height: 30px;
  padding-left: 8px;
  gap: 5px;
  color: #888;
}

.menu {
  display: flex;
  height: 20px;
  padding: 2px 7px;
  gap: 15px;
  border-bottom: 1px solid #e4e4e4;
  color: #666;
}

.tools {
  display: flex;
  height: 64px;
  margin-left: 4px;
  padding-left: 3px;
  border-left: 2px dotted #bbb;
}

.tools button {
  display: flex;
  flex-direction: column;
  align-items: center;
  width: 58px;
  padding-top: 7px;
  gap: 1px;
}

.tools svg {
  width: 36px;
  height: 34px;
}

.tools .view {
  width: 48px;
}

.path {
  display: flex;
  height: 28px;
  margin-left: 4px;
  border-left: 2px dotted #bbb;
}

.path button {
  width: 43px;
  padding: 0 10px 4px;
}

.path button svg {
  width: 12px;
}

.path-field {
  flex: 1;
  padding: 1px 0 3px 4px;
  border-left: 2px dotted #bbb;
}

.path-box {
  display: flex;
  align-items: center;
  height: 24px;
  padding-left: 2px;
  gap: 5px;
  border: 1px solid #666;
}

.list {
  flex: 1;
  border-top: 1px solid #777;
  border-bottom: 1px solid #777;
  background: #f7f7f7;
}

.list-head {
  position: relative;
  height: 25px;
  padding: 5px 8px;
  background: #fff;
}

.list-head svg {
  position: absolute;
  top: -4px;
  left: 122px;
  color: #555;
}

.file {
  display: flex;
  align-items: center;
  height: 19px;
  padding-left: 8px;
  gap: 3px;
}

.file svg {
  width: 13px;
}

.file.selected {
  background: #efefef;
}

.winrar footer {
  display: flex;
  align-items: center;
  height: 24px;
  padding-top: 3px;
  background: #f0f0f0;
}

.disk {
  display: flex;
  width: 42px;
  padding-left: 4px;
  gap: 3px;
  margin-right: 4px;
  border-right: 1px solid #ddd;
}

/* explorer */
.explorer {
  top: 14px;
  left: 284px;
  right: 211px;
}

.explorer .title {
  height: 31px;
  padding-left: 7px;
}

.title .app {
  width: 18px;
}

.title .bar {
  width: 1px;
  height: 12px;
  margin: 0 6px;
  background: #999;
}

.title .qa {
  width: 13px;
  margin: 0 5px;
}

.title .more {
  width: 8px;
  height: 8px;
  margin-left: 2px;
}

.title h1 {
  margin-left: 2px;
  font-size: 11px;
  font-weight: normal;
}

.explorer .win-controls {
  display: flex;
  margin-left: auto;
}

.explorer .win-controls button {
  width: 45px;
  padding: 8px 15px 8px 14px;
}

.explorer .win-controls svg {
  width: 12px;
}

.ribbon-tabs {
  display: flex;
  height: 24px;
  border-bottom: 1px solid #dadbdc;
  color: #444;
}

.ribbon-tabs button {
  width: 57px;
}

.ribbon-tabs .file-tab {
  width: 56px;
  background: #0063b1;
  color: #fff;
}

.ribbon-tabs .active {
  width: 58px;
  height: 24px;
  border: 1px solid #dadbdc;
  border-bottom: 0;
  background: #f5f6f7;
}

.ribbon-tabs .collapse {
  margin: 3px 6px 0 auto;
  color: #999;
}

.ribbon-tabs .help {
  width: 16px;
  height: 16px;
  margin: 3px 4px 0 0;
  border-radius: 50%;
  background: #0063b1;
  color: #fff;
  font-weight: bold;
}

.ribbon {
  display: flex;
  height: 92px;
  border-bottom: 1px solid #d4d6d8;
  background: #f5f6f7;
  color: #777;
}

.group {
  display: flex;
  flex-direction: column;
  border-right: 1px solid #e0e2e4;
}

.group h2 {
  padding-right: 4px;
  font-size: 11px;
  font-weight: normal;
  text-align: center;
  color: #444;
}

.group-body {
  display: flex;
  height: 74px;
  padding-left: 2px;
}

.clipboard {
  width: 263px;
}

.clipboard .group-body {
  padding-left: 4px;
}

.organize {
  width: 165px;
}

.organize .group-body {
  padding-left: 9px;
}

.new {
  width: 83px;
}

.open {
  width: 133px;
}

.select {
  width: 115px;
}

.select .group-body {
  padding-left: 7px;
}

.big {
  display: flex;
  flex-direction: column;
  align-items: center;
  width: 44px;
  padding-top: 8px;
  gap: 4px;
  line-height: 13px;
}

.big svg {
  width: 26px;
  height: 30px;
}

.pin-btn {
  width: 70px;
}

.pin-btn svg {
  width: 22px;
  color: #9aaac2;
}

.big.copy {
  width: 40px;
}

.open .big {
  width: 60px;
}

.stack {
  padding: 4px 0 0 3px;
}

.stack button {
  display: flex;
  align-items: center;
  height: 22px;
  gap: 4px;
  white-space: nowrap;
}

.stack svg {
  width: 14px;
}

.select .stack {
  padding-left: 0;
}

.select .stack button {
  gap: 3px;
}

.select .stack svg,
.new .stack svg {
  width: 16px;
}

.ribbon .caret,
.address .caret {
  width: 6px;
  height: 4px;
  color: #aaa;
}

.new .stack svg.caret {
  width: 6px;
  margin-left: -2px;
}

.stack.wide {
  width: 76px;
  margin-bottom: 10px;
  padding-top: 9px;
  padding-left: 0;
}

.stack.wide button {
  height: 29px;
}

.stack.second {
  padding-left: 8px;
  border-left: 1px solid #e0e2e4;
}

.ribbon .dark,
.ribbon .new .enabled .caret {
  color: #222;
}

.stack.enabled {
  color: #222;
}

.address {
  display: flex;
  align-items: center;
  height: 35px;
  padding: 0 13px 2px 4px;
}

.address > button {
  display: flex;
  justify-content: center;
  width: 30px;
}

.address > button svg {
  width: 14px;
  height: 12px;
}

.address .dim {
  color: #ccc;
}

.address .recent {
  width: 16px;
}

.address .recent .caret {
  width: 6px;
  height: 4px;
  color: #ccc;
}

.address .up {
  width: 26px;
}

.crumbs {
  display: flex;
  flex: 1;
  align-items: center;
  height: 22px;
  padding-left: 4px;
  border: 1px solid #d9d9d9;
}

.crumbs svg {
  width: 14px;
  height: 14px;
  color: #666;
}

.crumbs .star {
  width: 16px;
  height: 16px;
}

.crumbs span {
  margin: 0 5px;
}

.crumbs .drop {
  margin-left: auto;
}

.refresh {
  display: flex;
  width: 18px;
  height: 20px;
  padding: 4px 2px;
  border-left: 1px solid #d9d9d9;
}

.refresh svg {
  width: 12px;
  height: 12px;
}

.search {
  display: flex;
  align-items: center;
  width: 202px;
  height: 22px;
  margin-left: 11px;
  padding: 0 8px;
  border: 1px solid #d9d9d9;
}

.search input {
  flex: 1;
  min-width: 0;
}

.search svg {
  width: 12px;
  height: 12px;
}

input::placeholder {
  color: #666;
  opacity: 1;
}

.body {
  display: flex;
  height: 387px;
}

.tree {
  width: 140px;
  list-style: none;
}

.tree li {
  display: flex;
  align-items: center;
  height: 24px;
  margin-right: 1px;
  padding-left: 18px;
  border: 1px solid transparent;
  border-left: 0;
  white-space: nowrap;
}

.tree li.top {
  padding-left: 10px;
}

.tree .chev {
  width: 16px;
  margin-right: 6px;
  color: #999;
}

.tree .open .chev {
  color: #333;
}

.tree a {
  margin-left: 5px;
}

.tree .current {
  border-color: #99d1ff;
  background: #cce8ff;
}

.scrollbar {
  display: flex;
  flex-direction: column;
  width: 16px;
  padding: 1px 0;
  background: #f0f0f0;
  color: #444;
}

.track {
  display: flex;
  flex: 1;
  align-items: center;
}

.track i {
  width: 15px;
  height: 120px;
  margin-top: 76px;
  background: #cdcdcd;
}

.content {
  flex: 1;
  padding: 9px 8px 0;
}

.content h2 {
  display: flex;
  align-items: center;
  height: 20px;
  font-size: 14px;
  font-weight: normal;
  color: #1e2f7a;
}

.content h2 svg {
  color: #888;
}

.content h2::after {
  content: "";
  flex: 1;
  height: 1px;
  margin-left: 9px;
  background: #e2e2e2;
}

.folders {
  display: grid;
  grid-template-columns: repeat(auto-fill, 228px);
  row-gap: 18px;
  margin-top: 14px;
  padding-left: 38px;
}

.folder {
  display: flex;
  height: 46px;
  gap: 5px;
}

.thumb {
  position: relative;
  width: 40px;
  padding-top: 4px;
}

.thumb svg {
  width: 28px;
  height: 42px;
}

.thumb .over {
  position: absolute;
  right: 1px;
  bottom: 2px;
  width: 28px;
  height: 22px;
}

.thumb .arrow {
  right: 2px;
  bottom: 4px;
  width: 24px;
  height: 25px;
}

.thumb .paper {
  right: 5px;
  width: 22px;
  height: 28px;
}

.info b,
.info span {
  display: block;
  font-weight: normal;
}

.info span {
  color: #6d6d6d;
}

.info svg {
  width: 11px;
  height: 11px;
  margin-top: 2px;
  color: #8a9494;
}

.explorer footer {
  display: flex;
  align-items: center;
  height: 24px;
  padding: 0 9px 0 14px;
  gap: 7px;
  color: #1e395b;
}

.explorer footer span {
  margin-right: auto;
}

.explorer footer svg {
  height: 12px;
}

.explorer footer svg:last-child {
  width: 14px;
}

.watermark {
  position: absolute;
  right: 47px;
  bottom: 8px;
  display: flex;
  align-items: center;
  gap: 4px;
  color: #fff;
  font: 34px Roboto, sans-serif;
  filter: drop-shadow(0 0 2px #aaa);
}

.watermark svg {
  width: 56px;
  height: 62px;
}

/* taskbar */
.taskbar {
  display: flex;
  height: 40px;
  background: linear-gradient(to right, #011a20, #010b1c);
}

.taskbar button {
  display: flex;
  align-items: center;
  justify-content: center;
  width: 48px;
  margin-left: 1px;
}

.taskbar button svg {
  width: 24px;
  height: 24px;
}

.taskbar .start {
  margin: 0;
}

.taskbar .start svg,
.taskbar .small {
  width: 16px;
  height: 16px;
}

.task-search {
  display: flex;
  align-items: center;
  width: 288px;
  padding-left: 11px;
  gap: 9px;
  border: 1px solid #ccc;
  background: #f2f2f2;
}

.task-search svg {
  width: 18px;
  height: 18px;
}

.task-search input {
  flex: 1;
  min-width: 0;
  font-size: 14px;
}

.task-search input::placeholder {
  color: #444;
}

.taskbar .running {
  background: linear-gradient(#76b9ed, #76b9ed) bottom / 40px 2px no-repeat;
}

.taskbar .running.current {
  background: linear-gradient(#76b9ed, #76b9ed) bottom / 100% 2px no-repeat, #33464c;
}

.tray {
  display: flex;
  align-items: center;
  margin-left: auto;
  padding-right: 25px;
  gap: 8px;
  color: #fff;
}

.tray time {
  width: 56px;
  line-height: 18px;
  text-align: center;
}

.tray .notes {
  margin-left: 8px;
}
```
